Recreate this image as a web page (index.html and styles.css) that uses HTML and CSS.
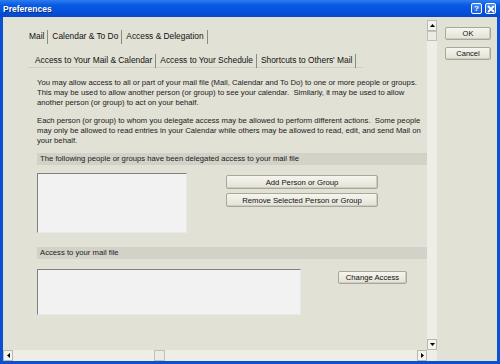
FILE: index.html
```html
<!DOCTYPE html>
<html>
<head>
<meta charset="utf-8">
<link rel="stylesheet" href="styles.css">
</head>
<body>
<div class="window">
  <div class="titlebar">
    <span class="title">Preferences</span>
    <span class="tbtns">
      <span class="tbtn">?</span>
      <span class="tbtn x">
        <svg width="8" height="8" viewBox="0 0 8 8"><path d="M1 1 L7 7 M7 1 L1 7" stroke="#fff" stroke-width="1.8"/></svg>
      </span>
    </span>
  </div>
  <div class="body">
    <div class="pane">
      <div class="pane-row">
        <div class="viewport">
          <div class="tabs tabs1">
            <span class="tab">Mail</span>
            <span class="tab">Calendar &amp; To Do</span>
            <span class="tab sel">Access &amp; Delegation</span>
          </div>
          <div class="panel">
            <div class="tabs tabs2">
              <span class="tab sel">Access to Your Mail &amp; Calendar</span>
              <span class="tab">Access to Your Schedule</span>
              <span class="tab">Shortcuts to Others' Mail</span>
            </div>
            <div class="content">
              <p>You may allow access to all or part of your mail file (Mail, Calendar and To Do) to one or more people or groups.<br>This may be used to allow another person (or group) to see your calendar.&nbsp; Similarly, it may be used to allow<br>another person (or group) to act on your behalf.</p>
              <p>Each person (or group) to whom you delegate access may be allowed to perform different actions.&nbsp; Some people<br>may only be allowed to read entries in your Calendar while others may be allowed to read, edit, and send Mail on<br>your behalf.</p>
              <div class="bar">The following people or groups have been delegated access to your mail file</div>
              <div class="row1">
                <div class="list list1"></div>
                <div class="btncol">
                  <button class="btn wide">Add Person or Group</button>
                  <button class="btn wide">Remove Selected Person or Group</button>
                </div>
              </div>
              <div class="bar bar2">Access to your mail file</div>
              <div class="row2">
                <div class="list list2"></div>
                <button class="btn change">Change Access</button>
              </div>
            </div>
          </div>
        </div>
        <div class="vscroll">
          <span class="sbtn"><svg width="5" height="3" viewBox="0 0 5 3"><path d="M0 3 L2.5 0 L5 3Z" fill="#000"/></svg></span>
          <span class="thumb"></span>
          <span class="track"></span>
          <span class="sbtn"><svg width="5" height="3" viewBox="0 0 5 3"><path d="M0 0 L2.5 3 L5 0Z" fill="#000"/></svg></span>
        </div>
      </div>
      <div class="hscroll">
        <span class="sbtn"><svg width="3" height="5" viewBox="0 0 3 5"><path d="M3 0 L0 2.5 L3 5Z" fill="#000"/></svg></span>
        <span class="htrack a"></span>
        <span class="hthumb"></span>
        <span class="htrack b"></span>
        <span class="sbtn"><svg width="3" height="5" viewBox="0 0 3 5"><path d="M0 0 L3 2.5 L0 5Z" fill="#000"/></svg></span>
      </div>
    </div>
    <div class="side">
      <button class="btn side-btn">OK</button>
      <button class="btn side-btn">Cancel</button>
    </div>
  </div>
</div>
</body>
</html>
```
FILE: styles.css
```css
* { box-sizing: border-box; }
html, body { margin: 0; padding: 0; }
body { width: 500px; height: 364px; overflow: hidden; font-family: "Liberation Sans", Arial, sans-serif; }

.window {
  width: 500px; height: 364px;
  background: #0a4fd4;
  padding: 0 3px 3px 3px;
  display: flex; flex-direction: column;
}
.titlebar {
  height: 17px; margin: 0 -3px;
  background: linear-gradient(#2d7cf0 0%, #0a5ae2 30%, #0550dc 70%, #0747c8 100%);
  display: flex; align-items: center; justify-content: space-between;
  padding: 0 4px 0 3px;
}
.title { color: #fff; font-weight: bold; font-size: 8.5px; text-shadow: 1px 1px 0 #0a2a80; }
.tbtns { display: flex; gap: 3px; }
.tbtn {
  width: 11px; height: 11px;
  border: 1px solid #fff; border-radius: 2px;
  background: linear-gradient(#3c8cf6, #1a5fe0);
  color: #fff; font-weight: bold; font-size: 8px; line-height: 9px; text-align: center;
  display: flex; align-items: center; justify-content: center;
}
.tbtn.x { background: linear-gradient(#4a90f6, #1d60e0); }

.body { flex: 1; display: flex; background: #e2e1d5; }
.pane { width: 434px; display: flex; flex-direction: column; }
.pane-row { flex: 1; display: flex; }
.viewport { width: 424px; padding: 13px 0 0 25px; background: #e2e1d5; white-space: nowrap; }

.tabs { display: flex; align-items: center; font-size: 8.4px; color: #111; }
.tab { padding: 0 3px 0 4px; border-right: 1px solid #8a8a80; line-height: 13px; height: 14px; }
.tabs1 { height: 14px; }
.tabs1 .tab:first-child { padding-left: 1px; }
.panel { margin-top: 10px; }
.tabs2 { padding-left: 3px; height: 14px; border-bottom: 1px solid #d0cfc4; width: 335px; }

.content { padding: 10px 0 0 9px; font-size: 7.7px; color: #1a1a1a; }
.content p { margin: 0 0 8px 0; line-height: 10px; }
.content p + p { margin-bottom: 7px; }

.bar { background: #d3d2c8; height: 12px; line-height: 12px; padding-left: 3px; width: 390px; font-size: 7.7px; }
.row1 { display: flex; margin-top: 8px; height: 60px; }
.list { background: #f2f2f2; border-top: 1px solid #808080; border-left: 1px solid #808080; border-right: 1px solid #e8e8e4; border-bottom: 1px solid #e8e8e4; }
.list1 { width: 150px; height: 60px; }
.btncol { display: flex; flex-direction: column; gap: 4px; margin: 2px 0 0 39px; }
.btn {
  font-family: "Liberation Sans", Arial, sans-serif;
  font-size: 7.7px; color: #111;
  background: linear-gradient(#f6f5ee, #e4e2d6);
  border: 1px solid #a8a79c; border-radius: 2px;
  box-shadow: inset -1px -1px 0 #cfcdc0;
  padding: 0; margin: 0;
}
.btn.wide { width: 152px; height: 14px; }
.bar2 { margin-top: 14px; }
.row2 { display: flex; margin-top: 10px; }
.list2 { width: 264px; height: 46px; }
.btn.change { width: 69px; height: 13px; margin: 2px 0 0 37px; }

.vscroll { width: 10px; display: flex; flex-direction: column; background: #efeee6; margin-top: 3px; }
.sbtn { width: 10px; height: 11px; background: #f4f3ee; border: 1px solid #b9b8ae; display: flex; align-items: center; justify-content: center; }
.thumb { height: 10px; border: 1px solid #c2c1b6; background: #ecebe3; }
.track { flex: 1; }
.hscroll { height: 11px; display: flex; background: #efeee6; }
.hscroll .sbtn { width: 10px; height: 11px; }
.htrack.a { width: 141px; }
.hthumb { width: 11px; border: 1px solid #c2c1b6; background: #ecebe3; }
.htrack.b { flex: 1; }
.hscroll .sbtn:last-child { margin-right: 10px; }

.side { flex: 1; display: flex; flex-direction: column; align-items: center; gap: 7px; padding-top: 10px; padding-left: 2px; }
.btn.side-btn { width: 46px; height: 13px; font-size: 7.5px; }
```
